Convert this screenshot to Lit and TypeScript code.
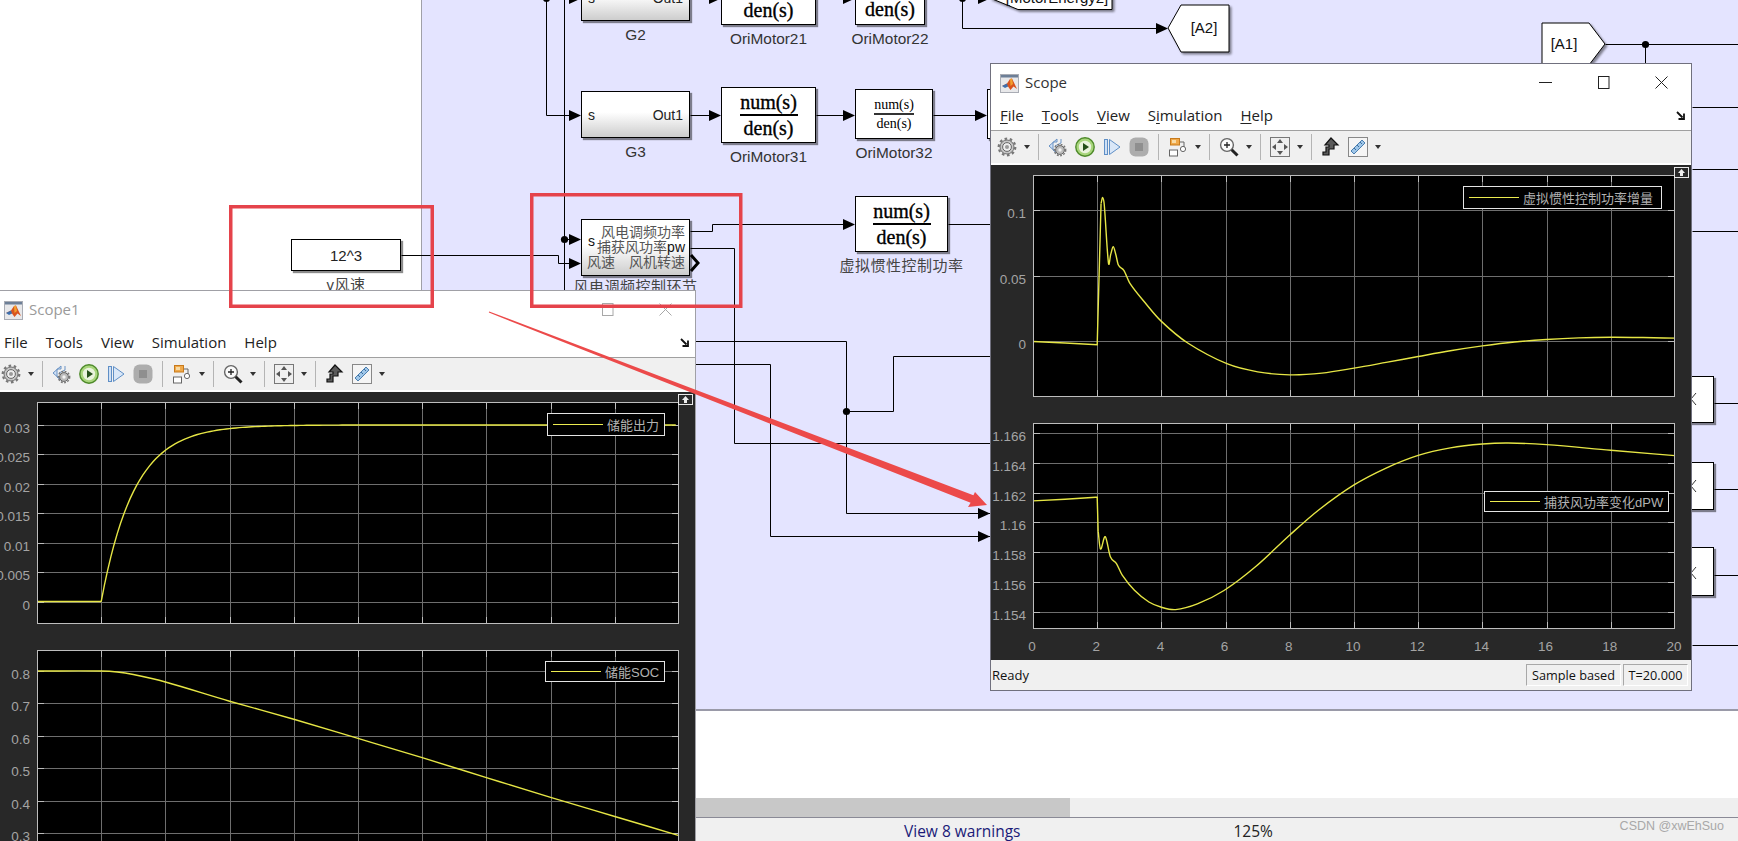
import { css, html, svg, LitElement, nothing } from "lit";
import { customElement, property } from "lit/decorators.js";

type Pt = [number, number];

interface PlotSpec {
  height: number;
  vMin: number;
  vMax: number;
  yTicks: { v: number; label: string }[];
  showX?: boolean;
  segments: { pts: Pt[]; smooth: boolean }[];
  legend: { text: string; top: number; right: number; width: number; height: number };
}

const PLOT_W = 642;

// cubic hermite over x, the points are not evenly spaced
function smoothPath(p: Pt[]) {
  const slope = (i: number) => {
    const a = p[Math.max(i - 1, 0)];
    const c = p[Math.min(i + 1, p.length - 1)];
    return (c[1] - a[1]) / (c[0] - a[0]);
  };
  let d = `M${p[0][0].toFixed(1)} ${p[0][1].toFixed(1)}`;
  for (let i = 0; i < p.length - 1; i++) {
    const b = p[i];
    const c = p[i + 1];
    const h = (c[0] - b[0]) / 3;
    d += `C${(b[0] + h).toFixed(2)} ${(b[1] + slope(i) * h).toFixed(2)} ${(c[0] - h).toFixed(2)} ${(c[1] - slope(i + 1) * h).toFixed(2)} ${c[0].toFixed(2)} ${c[1].toFixed(2)}`;
  }
  return d;
}

@customElement("scope-plot")
export class ScopePlot extends LitElement {
  static override styles = css`
    :host {
      display: block;
      position: relative;
      width: 642px;
    }
    svg {
      display: block;
      overflow: visible;
      background: #000;
    }
    .frame {
      fill: none;
      stroke: #bdbdbd;
      stroke-width: 1;
    }
    .grid {
      stroke: #6e6e6e;
      stroke-width: 1;
    }
    .tick {
      stroke: #bdbdbd;
      stroke-width: 1;
    }
    .trace {
      fill: none;
      stroke: #e6e645;
      stroke-width: 1.4;
    }
    text {
      font: 13.5px "Liberation Sans", Arial, sans-serif;
      fill: #a4a4a4;
    }
    .legend {
      position: absolute;
      box-sizing: border-box;
      display: flex;
      align-items: center;
      gap: 4px;
      padding-left: 5px;
      background: #000;
      border: 1px solid #e4e4e4;
      color: #b2b2b2;
      font: 13px "Liberation Sans", "Noto Sans CJK SC", sans-serif;
      white-space: nowrap;
    }
    .legend i {
      flex: none;
      width: 50px;
      height: 1.5px;
      background: #ecec50;
    }
  `;

  @property({ attribute: false }) spec!: PlotSpec;

  private _y(v: number) {
    const s = this.spec;
    return ((s.vMax - v) / (s.vMax - s.vMin)) * s.height;
  }

  private _x(t: number) {
    return (t / 20) * PLOT_W;
  }

  override render() {
    const s = this.spec;
    if (!s) return nothing;
    const ts = [2, 4, 6, 8, 10, 12, 14, 16, 18];
    const ys = s.yTicks.map((k) => Math.round(this._y(k.v)) + 0.5);
    return html`
      <svg width=${PLOT_W} height=${s.height} viewBox="0 0 ${PLOT_W} ${s.height}">
        ${ts.map((t) => {
          const x = Math.round(this._x(t)) + 0.5;
          return svg`<line class="grid" x1=${x} x2=${x} y1="0" y2=${s.height}></line>
            <line class="tick" x1=${x} x2=${x} y1=${s.height - 7} y2=${s.height}></line>
            <line class="tick" x1=${x} x2=${x} y1="0" y2="7"></line>`;
        })}
        ${ys.map(
          (y) => svg`<line class="grid" x1="0" x2=${PLOT_W} y1=${y} y2=${y}></line>
            <line class="tick" x1="0" x2="7" y1=${y} y2=${y}></line>
            <line class="tick" x1=${PLOT_W - 7} x2=${PLOT_W} y1=${y} y2=${y}></line>`
        )}
        ${s.segments.map((seg) => {
          const pts = seg.pts.map(([t, v]) => [this._x(t), this._y(v)] as Pt);
          const d = seg.smooth
            ? smoothPath(pts)
            : "M" + pts.map((p) => p.join(" ")).join("L");
          return svg`<path class="trace" d=${d}></path>`;
        })}
        <rect class="frame" x="0.5" y="0.5" width=${PLOT_W - 1} height=${s.height - 1}></rect>
        ${s.yTicks.map(
          (k, i) => svg`<text x="-7" y=${ys[i] + 7.5} text-anchor="end">${k.label}</text>`
        )}
        ${s.showX
          ? [0, ...ts, 20].map(
              (t) => svg`<text x=${this._x(t) - 1} y=${s.height + 22} text-anchor="middle">${t}</text>`
            )
          : nothing}
      </svg>
      <div
        class="legend"
        style="top:${s.legend.top}px;right:${s.legend.right}px;width:${s.legend.width}px;height:${s.legend.height}px"
      >
        <i></i><span>${s.legend.text}</span>
      </div>
    `;
  }
}

const dropArrow = html`<svg class="drop" width="6" height="4" viewBox="0 0 6 4"><path d="M0 0H6L3 4Z" fill="#333"></path></svg>`;

const ico = (body: unknown) =>
  html`<svg class="ico" width="20" height="20" viewBox="0 0 20 20">${body}</svg>`;

const icons = {
  gear: ico(svg`
    <circle cx="10" cy="10" r="8.3" fill="none" stroke="#777" stroke-width="2.2" stroke-dasharray="2.6 2.6"></circle>
    <circle cx="10" cy="10" r="7" fill="#c6c6c6" stroke="#6f6f6f"></circle>
    <circle cx="10" cy="10" r="4.4" fill="#eee" stroke="#666"></circle>
    <circle cx="10" cy="10" r="2" fill="#9a9a9a"></circle>`),
  back: ico(svg`
    <path d="M9 2V5L5 5V13L9 16L1 9Z" fill="#cfe0f5" stroke="#6a93c4"></path>
    <path d="M13 2V6L7 9L11 13" fill="none" stroke="#6a93c4"></path>
    <circle cx="12" cy="13" r="5.6" fill="none" stroke="#777" stroke-width="1.6" stroke-dasharray="1.8 1.5"></circle>
    <circle cx="12" cy="13" r="4.4" fill="#bbb" stroke="#666"></circle>
    <circle cx="12" cy="13" r="1.7" fill="#f2f2f2"></circle>`),
  play: ico(svg`
    <circle cx="10" cy="10" r="9.2" fill="#a9d67d" stroke="#4e8a2a" stroke-width="1.4"></circle>
    <circle cx="10" cy="10" r="6.2" fill="#eaf3dd"></circle>
    <path d="M8 6L14 10L8 14Z" fill="#25501a"></path>`),
  step: ico(svg`
    <rect x="2.5" y="2.5" width="3" height="15" fill="#cfe0f5" stroke="#5f8fc6"></rect>
    <path d="M7.5 2.5L18 10L7.5 17.5Z" fill="#d9e7f8" stroke="#5f8fc6"></path>`),
  stop: ico(svg`
    <rect x="0.5" y="0.5" width="19" height="19" rx="6" fill="#adadad"></rect>
    <rect x="6" y="6" width="8" height="8" fill="#8f8f8f"></rect>`),
  block: ico(svg`
    <path d="M11 5H16V10M10 16H5" fill="none" stroke="#666"></path>
    <rect x="2.5" y="1.5" width="9" height="6.5" fill="#f0a94a" stroke="#c77a1c"></rect>
    <rect x="4" y="3" width="4" height="3" fill="#f8dba5"></rect>
    <rect x="1.5" y="13" width="8" height="6" fill="#fff" stroke="#666"></rect>
    <circle cx="15" cy="12" r="2.6" fill="#fff" stroke="#666"></circle>`),
  zoom: ico(svg`
    <circle cx="8" cy="8" r="6.4" fill="#fafafa" stroke="#666" stroke-width="1.4"></circle>
    <path d="M8 5V11M5 8H11" stroke="#222" stroke-width="1.3"></path>
    <path d="M12.7 12.7L18.5 18.5" stroke="#222" stroke-width="3"></path>`),
  fit: ico(svg`
    <rect x="0.5" y="0.5" width="19" height="19" fill="#efefef" stroke="#777"></rect>
    <path d="M10 2L13 6H7ZM10 18L7 14H13ZM2 10L6 7V13ZM18 10L14 13V7Z" fill="#555"></path>`),
  bolt: ico(svg`
    <path d="M10 1L17 8H13V12H8V18H2V15H5V10H8V8H4Z" fill="#5a5a5a" stroke="#111" stroke-width="1.2"></path>`),
  ruler: ico(svg`
    <rect x="0.5" y="0.5" width="19" height="19" fill="#f5f5f5" stroke="#888"></rect>
    <path d="M3 14L14 3L17 6L6 17Z" fill="#9fc6e8" stroke="#4b7fb0"></path>
    <path d="M6 11L8 13M9 8L11 10M12 5L14 7" stroke="#3b6f9f"></path>`),
};

const matlabIcon = html`<svg class="logo" width="19" height="19" viewBox="0 0 19 19">
  <rect x="0.5" y="0.5" width="18" height="18" fill="#e8e8ea" stroke="#a9acb4"></rect>
  <rect x="1" y="1" width="17" height="2.5" fill="#6d7f97"></rect>
  <path d="M2 12L7 9.5L10 5L12 4.5L17 15L13.5 12.5L10.5 16L8 12.5Z" fill="#d9541e"></path>
  <path d="M2 12L7 9.5L8 12.5L5 14Z" fill="#3d6fae"></path>
  <path d="M10 5L12 4.5L13 10L10.5 12Z" fill="#f2a02e"></path>
</svg>`;

@customElement("scope-window")
export class ScopeWindow extends LitElement {
  static override styles = css`
    :host {
      display: flex;
      flex-direction: column;
      box-sizing: border-box;
      width: 702px;
      height: 628px;
      border: 1px solid #70707e;
      background: #fff;
      font: 15px "Open Sans", "Liberation Sans", sans-serif;
      color: #222;
    }
    .title {
      height: 38px;
      flex: none;
      display: flex;
      align-items: center;
      padding: 0 23px 0 9px;
      gap: 6px;
      color: #333;
    }
    .logo {
      flex: none;
    }
    .name {
      flex: 1;
      margin-top: -2px;
    }
    .controls {
      display: flex;
      gap: 45px;
      margin-top: -2px;
    }
    .controls svg {
      display: block;
      fill: none;
      stroke-width: 1;
    }
    .menu {
      height: 29px;
      flex: none;
      display: flex;
      align-items: center;
      gap: 18px;
      padding: 0 6px 2px 9px;
      box-sizing: border-box;
      border-bottom: 1px solid #a0a0a0;
    }
    .menu .resize {
      margin-left: auto;
    }
    u {
      text-underline-offset: 2px;
    }
    .tools {
      height: 32px;
      flex: none;
      display: flex;
      align-items: center;
      background: #f0f0f0;
    }
    .group {
      display: flex;
      align-items: center;
      gap: 7px;
      height: 26px;
      padding: 0 8px 0 9px;
      border-right: 1px solid #b4b4b4;
    }
    .group.first {
      padding-left: 6px;
    }
    .group.wide {
      padding-right: 9px;
    }
    .group.last {
      border-right: none;
    }
    .ico,
    .drop {
      flex: none;
      display: block;
    }
    .strip {
      height: 2px;
      flex: none;
      background: #fff;
    }
    .dark {
      position: relative;
      height: 495px;
      flex: none;
      box-sizing: border-box;
      display: flex;
      flex-direction: column;
      gap: 26px;
      padding: 10px 0 0 42px;
      background: #282828;
    }
    .collapse {
      position: absolute;
      top: 2px;
      right: 2px;
      width: 15px;
      height: 11px;
      box-sizing: border-box;
      border: 1px solid #e8e8e8;
      background: #2a2a2a;
    }
    .collapse svg {
      display: block;
    }
    .status {
      height: 30px;
      flex: none;
      box-sizing: border-box;
      display: flex;
      align-items: center;
      gap: 2px;
      padding: 0 3px 0 1px;
      background: #f0f0f0;
      font-size: 13px;
      color: #111;
    }
    .status .ready {
      flex: 1;
    }
    .status .cell {
      box-sizing: border-box;
      height: 22px;
      display: flex;
      align-items: center;
      justify-content: center;
      font-size: 12.7px;
      border: 1px solid #fff;
      border-top-color: #a8a8a8;
      border-left-color: #a8a8a8;
    }
    .sample {
      width: 95px;
    }
    .clock {
      width: 65px;
    }
    .inactive-name {
      color: #9a9a9a;
    }
  `;

  @property() name = "Scope";
  @property({ type: Boolean }) active = false;
  @property({ attribute: false }) plots: PlotSpec[] = [];

  private _menuLabel(label: string, idx: number) {
    if (!this.active) return label;
    return html`${label.slice(0, idx)}<u>${label[idx]}</u>${label.slice(idx + 1)}`;
  }

  override render() {
    const stroke = this.active ? "#222" : "#a8a8a8";
    return html`
      <div class="title">
        ${matlabIcon}
        <span class="name ${this.active ? "" : "inactive-name"}">${this.name}</span>
        <div class="controls">
          <svg width="13" height="13" viewBox="0 0 13 13" style="visibility:${this.active ? "visible" : "hidden"}">
            <path d="M0 6.5H13" stroke=${stroke}></path>
          </svg>
          <svg width="13" height="13" viewBox="0 0 13 13">
            <rect x="1.5" y="0.5" width="10.5" height="12" stroke=${stroke}></rect>
          </svg>
          <svg width="13" height="13" viewBox="0 0 13 13">
            <path d="M0.5 0.5L12.5 12.5M12.5 0.5L0.5 12.5" stroke=${stroke}></path>
          </svg>
        </div>
      </div>
      <div class="menu">
        <span>${this._menuLabel("File", 0)}</span>
        <span>${this._menuLabel("Tools", 0)}</span>
        <span>${this._menuLabel("View", 0)}</span>
        <span>${this._menuLabel("Simulation", 1)}</span>
        <span>${this._menuLabel("Help", 0)}</span>
        <svg class="resize" width="9" height="9" viewBox="0 0 9 9">
          <path d="M1 1L6.5 6.5M8 2.5V8H2.5" fill="none" stroke="#111" stroke-width="1.8"></path>
        </svg>
      </div>
      <div class="tools">
        <div class="group first">${icons.gear}${dropArrow}</div>
        <div class="group wide">${icons.back}${icons.play}${icons.step}${icons.stop}</div>
        <div class="group">${icons.block}${dropArrow}</div>
        <div class="group">${icons.zoom}${dropArrow}</div>
        <div class="group">${icons.fit}${dropArrow}</div>
        <div class="group last">${icons.bolt}${icons.ruler}${dropArrow}</div>
      </div>
      <div class="strip"></div>
      <div class="dark">
        ${this.plots.map((p) => html`<scope-plot .spec=${p}></scope-plot>`)}
        <div class="collapse">
          <svg width="13" height="9" viewBox="0 0 13 9"><path d="M6.5 1L10 5H8V8H5V5H3Z" fill="#eee"></path></svg>
        </div>
      </div>
      <div class="status">
        <span class="ready">Ready</span>
        <span class="cell sample">Sample based</span>
        <span class="cell clock">T=20.000</span>
      </div>
    `;
  }
}

const curveA: Pt[] = [
  [2.12, 0.105], [2.17, 0.1095], [2.22, 0.104], [2.35, 0.0597], [2.42, 0.066], [2.5, 0.072], [2.58, 0.066],
  [2.66, 0.058], [2.83, 0.054], [3.02, 0.044], [3.5, 0.029], [4, 0.015], [4.82, -0.0015], [6.04, -0.0173],
  [7, -0.0235], [8, -0.0258], [9, -0.0245], [10, -0.0207], [11, -0.0163], [12, -0.0118], [13, -0.0074],
  [14, -0.0037], [15, -0.0007], [16, 0.0012], [17, 0.0024], [18, 0.0029], [19, 0.0027], [20, 0.0022],
];

const curveB: Pt[] = [
  [2.03, 1.1594], [2.1, 1.15822], [2.25, 1.15905], [2.41, 1.1577], [2.6, 1.15725], [2.78, 1.15647],
  [3.16, 1.15546], [3.61, 1.15467], [4, 1.15432], [4.44, 1.15416], [5.12, 1.15454], [5.95, 1.15544],
  [6.93, 1.15703], [8, 1.15916], [8.9, 1.16084], [10, 1.16252], [11, 1.16365], [12, 1.1645], [13, 1.165],
  [14, 1.16526], [14.8, 1.16533], [16, 1.16522], [18, 1.16484], [20, 1.16448],
];

const expRise: Pt[] = [];
for (let t = 2; t <= 20; t += 0.1) expRise.push([t, 0.03 * (1 - Math.exp(-(t - 2) / 1.03))]);

const scopePlots: PlotSpec[] = [
  {
    height: 222,
    vMin: -0.0427,
    vMax: 0.1267,
    yTicks: [
      { v: 0.1, label: "0.1" },
      { v: 0.05, label: "0.05" },
      { v: 0, label: "0" },
    ],
    segments: [
      { pts: [[0, -0.0003], [1, -0.0015], [2, -0.0028], [2.12, 0.105]], smooth: false },
      { pts: curveA, smooth: true },
    ],
    legend: { text: "虚拟惯性控制功率增量", top: 11, right: 13, width: 199, height: 23 },
  },
  {
    height: 206,
    vMin: 1.15286,
    vMax: 1.16667,
    yTicks: [1.166, 1.164, 1.162, 1.16, 1.158, 1.156, 1.154].map((v) => ({ v, label: String(v) })),
    showX: true,
    segments: [
      { pts: [[0, 1.16145], [1, 1.16156], [1.95, 1.16169], [2, 1.16169], [2.03, 1.1594]], smooth: false },
      { pts: curveB, smooth: true },
    ],
    legend: { text: "捕获风功率变化dPW", top: 68, right: 6, width: 185, height: 21 },
  },
];

const scope1Plots: PlotSpec[] = [
  {
    height: 222,
    vMin: -0.00382,
    vMax: 0.0339,
    yTicks: [0.03, 0.025, 0.02, 0.015, 0.01, 0.005, 0].map((v) => ({ v, label: String(v) })),
    segments: [
      { pts: [[0, 0], [2, 0]], smooth: false },
      { pts: expRise, smooth: false },
    ],
    legend: { text: "储能出力", top: 11, right: 14, width: 118, height: 23 },
  },
  {
    height: 206,
    vMin: 0.229,
    vMax: 0.8648,
    yTicks: [0.8, 0.7, 0.6, 0.5, 0.4, 0.3].map((v) => ({ v, label: String(v) })),
    showX: true,
    segments: [
      {
        pts: [
          [0, 0.8], [2, 0.8], [2.5, 0.797], [3, 0.789], [4, 0.766], [6, 0.7067], [8, 0.651], [10, 0.592],
          [12, 0.5325], [14, 0.471], [16, 0.41], [18, 0.351], [20, 0.292],
        ],
        smooth: true,
      },
    ],
    legend: { text: "储能SOC", top: 11, right: 14, width: 120, height: 21 },
  },
];

// wires of the model, in page coordinates
const wires = [
  "546,-5 546,115 570,115",
  "564,-5 564,292",
  "690,115 711,115",
  "816,115 844,115",
  "933,115 976,115",
  "690,-2 711,-2",
  "816,-2 844,-2",
  "925,-2 979,-2",
  "962,-2 962,28 1157,28",
  "401,255 558,255 558,263 570,263",
  "564,239 570,239",
  "690,231 712,231 712,224 844,224",
  "948,224 990,224",
  "690,248 734,248 734,443 990,443",
  "690,341 846,341 846,513 990,513",
  "690,364 770,364 770,536 990,536",
  "846,411 893,411 893,356 990,356",
  "1605,44 1738,44",
  "1645,44 1645,63",
  "1692,107 1738,107",
  "1692,169 1738,169",
  "1692,231 1738,231",
  "1714,403 1738,403",
  "1714,489 1738,489",
  "1714,575 1738,575",
  "1692,645 1738,645",
];

const arrowTips: Pt[] = [
  [581, 115], [721, 115], [855, 115], [987, 115],
  [581, -2], [721, -2], [855, -2], [990, -2],
  [1168, 28], [581, 263], [581, 239], [855, 224],
  [990, 513], [990, 536],
];

const dots: Pt[] = [
  [546, -2], [962, -2], [564, 239], [846, 411], [1645, 44],
];

const frac = (big: boolean) => html`
  <div class="frac ${big ? "big" : "small"}">
    <span>num(s)</span><i></i><span>den(s)</span>
  </div>
`;

const productEdges = [399, 486, 573];

@customElement("app-root")
export class AppRoot extends LitElement {
  static override styles = css`
    :host {
      display: block;
      position: relative;
      width: 1738px;
      height: 841px;
      overflow: hidden;
      background: #fff;
      font-family: "Liberation Sans", "Noto Sans CJK SC", Arial, sans-serif;
      color: #222;
    }
    .canvas {
      height: 711px;
      box-sizing: border-box;
      display: flex;
      border-bottom: 2px solid #9a9aa8;
    }
    .gutter {
      width: 422px;
      flex: none;
      box-sizing: border-box;
      border-right: 1px solid #a0a0a8;
    }
    .lavender {
      flex: 1;
      background: #e4e4ff;
    }
    .blank {
      height: 87px;
    }
    .scrollbar {
      height: 19px;
      background: #efefef;
    }
    .scrollbar div {
      width: 1070px;
      height: 100%;
      background: #c8c8c8;
    }
    .statusbar {
      height: 24px;
      box-sizing: border-box;
      display: flex;
      align-items: center;
      gap: 213px;
      padding: 3px 0 0 904px;
      border-top: 1px solid #8a8a96;
      background: #f0f0f0;
      font: 15.5px "Open Sans", "Liberation Sans", sans-serif;
    }
    .statusbar .warn {
      color: #1a1a78;
    }
    .watermark {
      position: absolute;
      right: 14px;
      top: 819px;
      font: 12.5px "Liberation Sans", sans-serif;
      color: #a8a8a8;
    }

    .diagram {
      position: absolute;
      inset: 0;
    }
    .wires {
      position: absolute;
      inset: 0;
      overflow: visible;
    }
    .wires polyline {
      fill: none;
      stroke: #000;
      stroke-width: 1;
    }
    .tag {
      fill: #fff;
      stroke: #000;
      filter: drop-shadow(2px 2px 1px rgba(0, 0, 0, 0.45));
    }
    .wires text {
      font: 15px "Liberation Sans", sans-serif;
      fill: #111;
      text-anchor: middle;
    }
    .block {
      position: absolute;
      box-sizing: border-box;
      display: flex;
      align-items: center;
      justify-content: center;
      background: #fff;
      border: 1px solid #000;
      box-shadow: 2px 2px 1px rgba(0, 0, 0, 0.45);
      font-size: 14px;
    }
    .block.sub {
      justify-content: space-between;
      padding: 0 6px;
      background: linear-gradient(#fff 45%, #cdcdcd);
    }
    .block.sub.bare {
      padding: 0;
    }
    .label {
      position: absolute;
      top: 100%;
      left: 50%;
      margin-top: 6px;
      transform: translateX(-50%);
      line-height: 18px;
      font-size: 15.4px;
      white-space: nowrap;
      color: #333;
    }
    .label.cjk {
      font-size: 15px;
      letter-spacing: 0.5px;
      color: #444;
    }
    .label.tight {
      margin-top: 3px;
    }
    .frac {
      display: flex;
      flex-direction: column;
      align-items: center;
      font-family: "Liberation Serif", "Times New Roman", serif;
      color: #000;
    }
    .frac.big {
      font-size: 20px;
      line-height: 24px;
      -webkit-text-stroke: 0.35px #000;
    }
    .frac.big i {
      width: 58px;
      height: 1.5px;
      background: #000;
    }
    .frac.small {
      font-size: 14px;
      line-height: 17px;
    }
    .frac.small i {
      width: 40px;
      height: 1.5px;
      background: #333;
    }
    .wind {
      display: grid;
      width: 100%;
      height: 100%;
      box-sizing: border-box;
      padding: 5px 4px 5px 5px;
      grid-template-rows: repeat(3, 1fr);
      line-height: 15px;
      color: #555;
      white-space: nowrap;
    }
    .wind .row {
      display: flex;
      justify-content: space-between;
      align-items: center;
    }
    .wind .row.end {
      justify-content: flex-end;
    }
    .wind b {
      font-weight: 400;
      color: #111;
    }
    .wind .s {
      position: absolute;
      left: 6px;
      top: 14px;
      color: #111;
    }
    .const {
      font-size: 15px;
    }
    scope-window {
      position: absolute;
    }
    .win-main {
      left: 990px;
      top: 63px;
    }
    .win-back {
      left: -6px;
      top: 290px;
      border-color: #a0a0a6;
    }
    .annot {
      position: absolute;
      inset: 0;
      overflow: visible;
    }
    .annot rect {
      fill: none;
      stroke: #e5434b;
      stroke-width: 3.5;
    }
    .annot polygon {
      fill: #ec4a4a;
    }
  `;

  override render() {
    return html`
      <div class="canvas">
        <div class="gutter"></div>
        <div class="lavender"></div>
      </div>
      <div class="blank"></div>
      <div class="scrollbar"><div></div></div>
      <div class="statusbar">
        <span class="warn">View 8 warnings</span>
        <span>125%</span>
      </div>
      <div class="watermark">CSDN @xwEhSuo</div>

      <div class="diagram">
        <svg class="wires" width="1738" height="841" viewBox="0 0 1738 841">
          ${wires.map(
            (w) => svg`<polyline points=${w
              .split(" ")
              .map((p) => p.split(",").map((n) => Number(n) + 0.5).join(","))
              .join(" ")}></polyline>`
          )}
          ${arrowTips.map(
            ([x, y]) => svg`<path d="M${x} ${y + 0.5}L${x - 12} ${y - 5}V${y + 6}Z" fill="#000"></path>`
          )}
          ${dots.map(([x, y]) => svg`<circle cx=${x + 0.5} cy=${y + 0.5} r="3.6" fill="#000"></circle>`)}
          <path d="M691 255L698 263L691 271" fill="none" stroke="#000" stroke-width="3"></path>
        </svg>

        <!-- blocks sit on a free canvas, so their place is the content -->
        ${this._block(581, -26, 109, 47, "sub", html`<span>s</span><span>Out1</span>`, "G2")}
        ${this._block(581, 91, 109, 47, "sub", html`<span>s</span><span>Out1</span>`, "G3")}
        ${this._block(721, -31, 95, 56, "", frac(true), "OriMotor21")}
        ${this._block(721, 87, 95, 56, "", frac(true), "OriMotor31")}
        ${this._block(855, -33, 70, 58, "", frac(true), "OriMotor22")}
        ${this._block(855, 89, 78, 50, "", frac(false), "OriMotor32")}
        ${this._block(855, 196, 93, 56, "", frac(true), "虚拟惯性控制功率", "cjk")}
        ${this._block(987, 89, 40, 50, "", nothing, "")}
        ${this._block(291, 239, 110, 32, "const", "12^3", "v风速", "cjk")}
        ${this._block(
          581,
          219,
          109,
          57,
          "sub bare",
          html`<div class="wind">
            <div class="row end">风电调频功率</div>
            <div class="row end">捕获风功率<b>pw</b></div>
            <div class="row"><span>风速</span><span>风机转速</span></div>
            <span class="s">s</span>
          </div>`,
          "风电调频控制环节",
          "cjk tight"
        )}
        ${this._block(1660, 376, 54, 47, "", nothing, "")}
        ${this._block(1660, 462, 54, 48, "", nothing, "")}
        ${this._block(1660, 547, 54, 49, "", nothing, "")}

        <svg class="wires" width="1738" height="841" viewBox="0 0 1738 841">
          ${productEdges.map(
            (y) => svg`<path d="M1691 ${y}L1696 ${y - 6}M1691 ${y}L1696 ${y + 6}" stroke="#333" fill="none"></path>`
          )}
          <polygon class="tag" points="990,-2 1018,9.5 1112,9.5 1112,-20 1018,-20"></polygon>
          <text x="1057" y="3">[MotorEnergy2]</text>
          <polygon class="tag" points="1168,28 1181,5 1229,5 1229,52 1181,52"></polygon>
          <text x="1204" y="33">[A2]</text>
          <polygon class="tag" points="1542,23 1589,23 1605,44 1589,65 1542,65"></polygon>
          <text x="1564" y="49">[A1]</text>
        </svg>
      </div>

      <scope-window class="win-back" name="Scope1" .plots=${scope1Plots}></scope-window>
      <scope-window class="win-main" name="Scope" active .plots=${scopePlots}></scope-window>

      <svg class="annot" width="1738" height="841" viewBox="0 0 1738 841">
        <rect x="230.75" y="206.75" width="201.5" height="99.5"></rect>
        <rect x="531.75" y="194.75" width="209" height="111.5"></rect>
        <polygon points="489.2,311.4 973.4,495.3 975,492 987,505 968,507 970.6,502.7 488.8,312.6"></polygon>
      </svg>
    `;
  }

  private _block(
    x: number,
    y: number,
    w: number,
    h: number,
    cls: string,
    content: unknown,
    label: string,
    labelCls = ""
  ) {
    return html`<div class="block ${cls}" style="left:${x}px;top:${y}px;width:${w}px;height:${h}px">
      ${content}
      ${label ? html`<div class="label ${labelCls}">${label}</div>` : nothing}
    </div>`;
  }
}
